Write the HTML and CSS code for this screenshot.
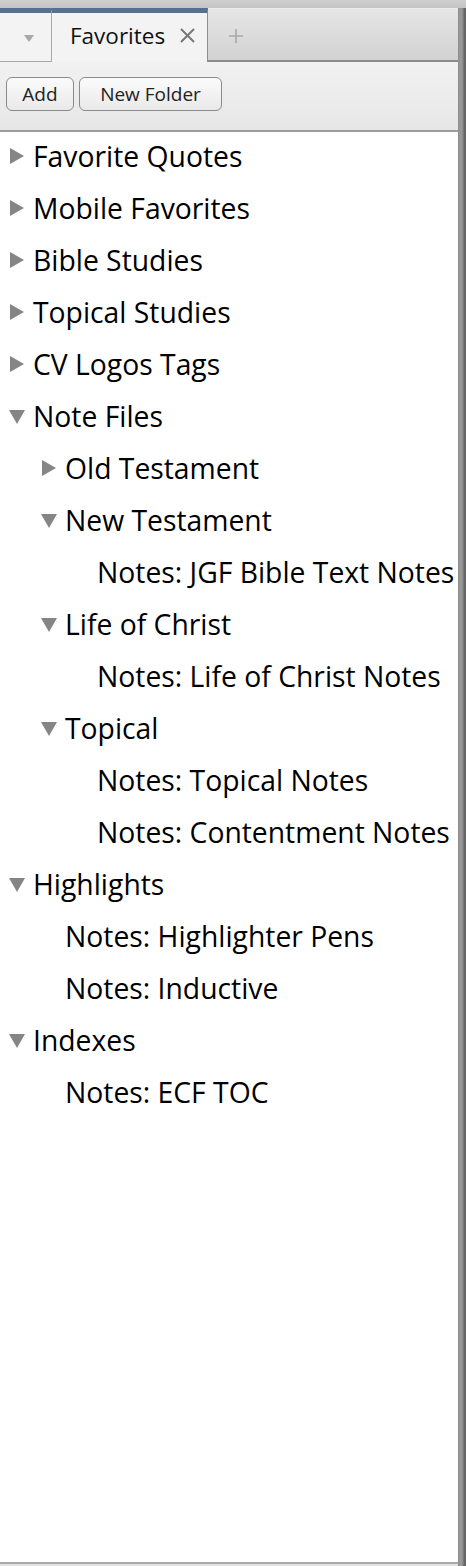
FILE: index.html
```html
<!DOCTYPE html>
<html lang="en">
<head>
<meta charset="utf-8">
<title>Favorites</title>
<link rel="stylesheet" href="styles.css">
</head>
<body>
<div class="window">
  <div class="panel">
    <div class="tabbar">
      <div class="tab tab-menu">
        <svg class="menu-arrow" width="10" height="7" viewBox="0 0 10 7"><path d="M0 0H10L5 7Z" fill="#a8a8a8"/></svg>
      </div>
      <div class="tab tab-active">
        <span class="tab-label">Favorites</span>
        <svg class="tab-close" width="17" height="17" viewBox="0 0 17 17"><path d="M2 2L15 15M15 2L2 15" stroke="#777" stroke-width="2" fill="none"/></svg>
      </div>
      <div class="tab-add">
        <svg width="14" height="14" viewBox="0 0 14 14"><path d="M7 0V14M0 7H14" stroke="#a9a9a9" stroke-width="1.6" fill="none"/></svg>
      </div>
    </div>
    <div class="toolbar">
      <button class="btn btn-add">Add</button>
      <button class="btn btn-folder">New Folder</button>
    </div>
    <div class="tree">
      <ul class="tree-list">
        <li><div class="row"><span class="twisty closed"></span><span class="label">Favorite Quotes</span></div></li>
        <li><div class="row"><span class="twisty closed"></span><span class="label">Mobile Favorites</span></div></li>
        <li><div class="row"><span class="twisty closed"></span><span class="label">Bible Studies</span></div></li>
        <li><div class="row"><span class="twisty closed"></span><span class="label">Topical Studies</span></div></li>
        <li><div class="row"><span class="twisty closed"></span><span class="label">CV Logos Tags</span></div></li>
        <li><div class="row"><span class="twisty open"></span><span class="label">Note Files</span></div>
          <ul class="tree-list nested">
            <li><div class="row"><span class="twisty closed"></span><span class="label">Old Testament</span></div></li>
            <li><div class="row"><span class="twisty open"></span><span class="label">New Testament</span></div>
              <ul class="tree-list nested">
                <li><div class="row"><span class="twisty"></span><span class="label">Notes: JGF Bible Text Notes</span></div></li>
              </ul>
            </li>
            <li><div class="row"><span class="twisty open"></span><span class="label">Life of Christ</span></div>
              <ul class="tree-list nested">
                <li><div class="row"><span class="twisty"></span><span class="label">Notes: Life of Christ Notes</span></div></li>
              </ul>
            </li>
            <li><div class="row"><span class="twisty open"></span><span class="label">Topical</span></div>
              <ul class="tree-list nested">
                <li><div class="row"><span class="twisty"></span><span class="label">Notes: Topical Notes</span></div></li>
                <li><div class="row"><span class="twisty"></span><span class="label">Notes: Contentment Notes</span></div></li>
              </ul>
            </li>
          </ul>
        </li>
        <li><div class="row"><span class="twisty open"></span><span class="label">Highlights</span></div>
          <ul class="tree-list nested">
            <li><div class="row"><span class="twisty"></span><span class="label">Notes: Highlighter Pens</span></div></li>
            <li><div class="row"><span class="twisty"></span><span class="label">Notes: Inductive</span></div></li>
          </ul>
        </li>
        <li><div class="row"><span class="twisty open"></span><span class="label">Indexes</span></div>
          <ul class="tree-list nested">
            <li><div class="row"><span class="twisty"></span><span class="label">Notes: ECF TOC</span></div></li>
          </ul>
        </li>
      </ul>
    </div>
    <div class="panel-foot"></div>
  </div>
  <div class="edge"></div>
</div>
</body>
</html>
```

FILE: styles.css
```css
* { box-sizing: border-box; }

html, body {
  margin: 0;
  padding: 0;
}

body {
  width: 466px;
  height: 1566px;
  overflow: hidden;
  background: linear-gradient(#cfcfcf, #c4c4c4 8px);
  font-family: "Open Sans", "Noto Sans", sans-serif;
  color: #000;
}

.window {
  display: flex;
  height: 1566px;
  padding-top: 8px;
}

.panel {
  width: 458px;
  display: flex;
  flex-direction: column;
  overflow: hidden;
}

.edge {
  width: 8px;
  background: linear-gradient(to right, #8e8e8e 0, #9c9c9c 3px, #8a8a8a 5px, #666 6px, #666 8px);
}

/* tabs */
.tabbar {
  display: flex;
  height: 54px;
  flex: none;
}

.tab {
  border-top: 5px solid #56718f;
  background: #f3f3f3;
}

.tab-menu {
  width: 52px;
  border-right: 1px solid #a9a9a9;
  border-bottom: 1px solid #a9a9a9;
  display: flex;
  justify-content: center;
  padding-top: 22px;
}

.menu-arrow { margin-left: 6px; }

.tab-active {
  width: 156px;
  border-right: 1px solid #8f8f8f;
  display: flex;
  align-items: flex-start;
  padding: 7px 0 0 18px;
  gap: 14px;
}

.tab-label {
  font-size: 22.5px;
  font-weight: 500;
  line-height: 32px;
  color: #111;
}

.tab-close { margin-top: 7px; }

.tab-add {
  flex: 1;
  background: linear-gradient(#e6e6e6, #d2d2d2);
  border-top: 1px solid #ececec;
  border-bottom: 2px solid #8c8c8c;
  padding: 20px 0 0 21px;
}

.tab-add svg { display: block; }

/* toolbar */
.toolbar {
  height: 70px;
  flex: none;
  background: linear-gradient(#f1f1f1, #e7e7e7);
  border-bottom: 2px solid #9c9c9c;
  display: flex;
  align-items: flex-start;
  gap: 5px;
  padding: 15px 0 0 6px;
}

.btn {
  height: 34px;
  border: 1px solid #8a8a8a;
  border-radius: 6px;
  background: linear-gradient(#fbfbfb, #e9e9e9);
  font-family: "Open Sans", "Noto Sans", sans-serif;
  font-size: 19px;
  font-weight: 500;
  line-height: 32px;
  color: #222;
  padding: 0;
  margin: 0;
}

.btn-add { width: 68px; }
.btn-folder { width: 143px; }

/* tree */
.tree {
  flex: 1;
  background: #fff;
  overflow: hidden;
}

.tree-list {
  list-style: none;
  margin: 0;
  padding: 0;
}

.tree-list.nested { padding-left: 32px; }

.row {
  display: flex;
  align-items: flex-start;
  height: 52px;
  white-space: nowrap;
}

.twisty {
  flex: none;
  width: 33px;
  height: 52px;
  position: relative;
}

.twisty.closed::before {
  content: "";
  position: absolute;
  left: 10px;
  top: 16px;
  border-style: solid;
  border-width: 8px 0 8px 14px;
  border-color: transparent transparent transparent #858585;
}

.twisty.open::before {
  content: "";
  position: absolute;
  left: 9px;
  top: 18px;
  border-style: solid;
  border-width: 14px 8px 0 8px;
  border-color: #858585 transparent transparent transparent;
}

.label {
  font-size: 28.3px;
  font-weight: 500;
  line-height: 48px;
  color: #000;
}

.panel-foot {
  flex: none;
  height: 4px;
  border-top: 2px solid #a9a9a9;
  background: #e2e2e2;
}
```
